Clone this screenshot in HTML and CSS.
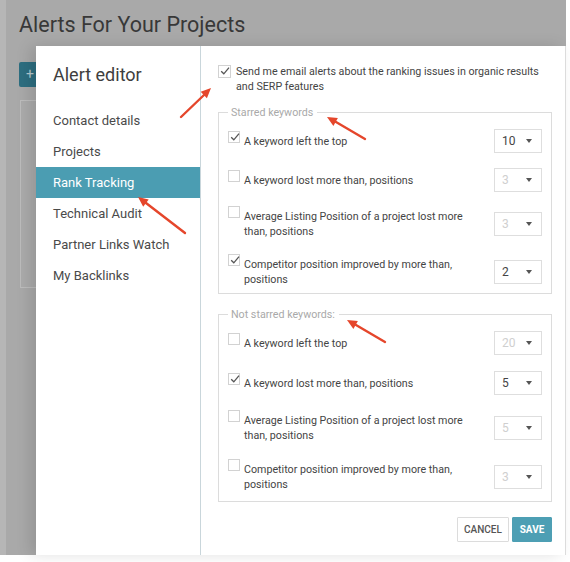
FILE: index.html
```html
<!DOCTYPE html>
<html lang="en">
<head>
<meta charset="utf-8">
<title>Alert editor</title>
<link rel="stylesheet" href="styles.css">
</head>
<body>
<div class="page">
  <div class="backdrop">
    <h1 class="page-title">Alerts For Your Projects</h1>
    <div class="add-btn">+</div>
    <div class="bg-card"></div>
  </div>

  <div class="modal">
    <aside class="sidebar">
      <h2 class="sidebar-title">Alert editor</h2>
      <ul class="menu">
        <li class="menu-item">Contact details</li>
        <li class="menu-item">Projects</li>
        <li class="menu-item active">Rank Tracking</li>
        <li class="menu-item">Technical Audit</li>
        <li class="menu-item">Partner Links Watch</li>
        <li class="menu-item">My Backlinks</li>
      </ul>
    </aside>

    <section class="content">
      <div class="master">
        <span class="check checked master-check"><svg viewBox="0 0 12 12"><polyline points="2.2,6.2 4.8,8.8 10,2.6"/></svg></span>
        <span class="master-text">Send me email alerts about the ranking issues in organic results and SERP features</span>
      </div>

      <fieldset class="group">
        <legend class="group-legend">Starred keywords</legend>
        <div class="row">
          <div class="opt"><span class="check checked"><svg viewBox="0 0 12 12"><polyline points="2.2,6.2 4.8,8.8 10,2.6"/></svg></span><span class="opt-text">A keyword left the top</span></div>
          <div class="select"><span class="val">10</span><span class="caret"></span></div>
        </div>
        <div class="row">
          <div class="opt"><span class="check"></span><span class="opt-text">A keyword lost more than, positions</span></div>
          <div class="select disabled"><span class="val">3</span><span class="caret"></span></div>
        </div>
        <div class="row">
          <div class="opt"><span class="check"></span><span class="opt-text">Average Listing Position of a project lost more than, positions</span></div>
          <div class="select disabled"><span class="val">3</span><span class="caret"></span></div>
        </div>
        <div class="row">
          <div class="opt"><span class="check checked"><svg viewBox="0 0 12 12"><polyline points="2.2,6.2 4.8,8.8 10,2.6"/></svg></span><span class="opt-text">Competitor position improved by more than, positions</span></div>
          <div class="select"><span class="val">2</span><span class="caret"></span></div>
        </div>
      </fieldset>

      <fieldset class="group group-second">
        <legend class="group-legend">Not starred keywords:</legend>
        <div class="row">
          <div class="opt"><span class="check"></span><span class="opt-text">A keyword left the top</span></div>
          <div class="select disabled"><span class="val">20</span><span class="caret"></span></div>
        </div>
        <div class="row">
          <div class="opt"><span class="check checked"><svg viewBox="0 0 12 12"><polyline points="2.2,6.2 4.8,8.8 10,2.6"/></svg></span><span class="opt-text">A keyword lost more than, positions</span></div>
          <div class="select"><span class="val">5</span><span class="caret"></span></div>
        </div>
        <div class="row">
          <div class="opt"><span class="check"></span><span class="opt-text">Average Listing Position of a project lost more than, positions</span></div>
          <div class="select disabled"><span class="val">5</span><span class="caret"></span></div>
        </div>
        <div class="row">
          <div class="opt"><span class="check"></span><span class="opt-text">Competitor position improved by more than, positions</span></div>
          <div class="select disabled"><span class="val">3</span><span class="caret"></span></div>
        </div>
      </fieldset>

      <div class="actions">
        <button class="btn btn-cancel" type="button">CANCEL</button>
        <button class="btn btn-save" type="button">SAVE</button>
      </div>
    </section>
  </div>

  <svg class="arrows" viewBox="0 0 570 562" width="570" height="562">
    <g class="arrow">
      <line x1="181" y1="117" x2="204" y2="95"/>
      <polygon points="211,88 206.9,98.2 200.7,91.7"/>
    </g>
    <g class="arrow">
      <line x1="365" y1="139" x2="336" y2="122"/>
      <polygon points="327,117 337.9,118.1 333.4,125.9"/>
    </g>
    <g class="arrow">
      <line x1="185" y1="233" x2="146" y2="203"/>
      <polygon points="138,197 148.7,199.5 143.2,206.7"/>
    </g>
    <g class="arrow">
      <line x1="385" y1="342" x2="356" y2="325"/>
      <polygon points="347,320 357.9,321.1 353.4,328.9"/>
    </g>
  </svg>
</div>
</body>
</html>
```

FILE: styles.css
```css
* { box-sizing: border-box; }

html, body {
  margin: 0;
  padding: 0;
  background: #ffffff;
}

body {
  font-family: Roboto, "Liberation Sans", Arial, sans-serif;
  color: #444;
}

.page {
  position: relative;
  width: 570px;
  height: 562px;
  overflow: hidden;
}

.backdrop {
  width: 566px;
  height: 555px;
  background: #a9a9a9;
  border-left: 6px solid #b6b6b6;
  padding: 11px 0 0 13px;
}

.page-title {
  margin: 0;
  font-size: 21.5px;
  line-height: 28px;
  font-weight: 400;
  color: #383838;
}

.add-btn {
  margin-top: 23px;
  width: 34px;
  height: 25px;
  background: #2d6e80;
  color: #b7c9ce;
  font-size: 14px;
  line-height: 25px;
  padding-left: 7px;
  border-radius: 2px;
}

.bg-card {
  margin-top: 13px;
  margin-left: 1px;
  width: 60px;
  height: 188px;
  border: 1px solid #bdbdbd;
  background: #ababab;
}

/* modal */
.modal {
  position: absolute;
  left: 36px;
  top: 46px;
  width: 530px;
  height: 509px;
  background: #ffffff;
  display: flex;
  border-right: 1px solid #dcdcdc;
  box-shadow: -6px 0 14px rgba(0, 0, 0, 0.12);
}

.sidebar {
  width: 165px;
  flex: none;
  border-right: 1px solid #c9d6db;
  padding-top: 17px;
}

.sidebar-title {
  margin: 0 0 18px 17px;
  font-size: 18px;
  line-height: 24px;
  font-weight: 400;
  color: #3e3e3e;
}

.menu {
  list-style: none;
  margin: 0;
  padding: 0;
}

.menu-item {
  height: 31px;
  line-height: 31px;
  padding-left: 17px;
  font-size: 13px;
  color: #4a4a4a;
}

.menu-item.active {
  background: #4b9db2;
  color: #ffffff;
}

.content {
  flex: 1;
  padding: 18px 13px 13px 17px;
  display: flex;
  flex-direction: column;
  font-size: 10.7px;
}

.master {
  display: flex;
  align-items: flex-start;
  gap: 5px;
  line-height: 15px;
}

.master-text {
  flex: 1;
  color: #444;
}

.check {
  flex: none;
  width: 13px;
  height: 13px;
  border: 1px solid #d2d2d2;
  background: #fff;
  display: block;
  position: relative;
}

.check svg {
  position: absolute;
  left: 0;
  top: -1px;
  width: 12px;
  height: 12px;
  fill: none;
  stroke: #555;
  stroke-width: 1.3;
}

.master-check {
  margin-top: 1px;
}

.group {
  margin: 11px 0 0 0;
  padding: 9px 9px 5px 9px;
  border: 1px solid #dcdcdc;
  display: flex;
  flex-direction: column;
  gap: 15px;
  min-width: 0;
}

.group-second {
  margin-top: 13px;
  gap: 16px;
  padding-bottom: 8px;
}

.group-legend {
  padding: 0 4px 0 3px;
  font-size: 10.7px;
  line-height: 15px;
  color: #a9a9a9;
}

.row {
  display: flex;
  align-items: center;
  min-height: 24px;
}

.opt {
  flex: 1;
  display: flex;
  align-items: flex-start;
  gap: 4px;
}

.opt .check {
  margin-top: -1.5px;
  width: 12px;
  height: 12px;
}

.opt-text {
  width: 236px;
  padding: 1.5px 0;
  line-height: 15px;
  color: #444;
}

.select {
  flex: none;
  width: 48px;
  height: 24px;
  border: 1px solid #dedede;
  display: flex;
  align-items: center;
  justify-content: space-between;
  padding: 0 9px 0 7px;
  font-size: 12px;
  color: #444;
}

.select.disabled .val {
  color: #cfcfcf;
}

.caret {
  width: 0;
  height: 0;
  border-left: 3.5px solid transparent;
  border-right: 3.5px solid transparent;
  border-top: 4px solid #555;
}

.actions {
  margin-top: 15px;
  display: flex;
  justify-content: flex-end;
  gap: 3px;
}

.btn {
  height: 25px;
  font-family: Roboto, "Liberation Sans", Arial, sans-serif;
  font-size: 10px;
  padding: 0;
  border-radius: 1px;
  cursor: pointer;
}

.btn-cancel {
  width: 52px;
  background: #fff;
  border: 1px solid #dcdcdc;
  color: #555;
  font-weight: 500;
}

.btn-save {
  width: 40px;
  background: #4d9fb4;
  border: 1px solid #4d9fb4;
  color: #fff;
  font-weight: 700;
}

/* annotations */
.arrows {
  position: absolute;
  left: 0;
  top: 0;
  pointer-events: none;
}

.arrow line {
  stroke: #e5462b;
  stroke-width: 2.4;
  stroke-linecap: round;
}

.arrow polygon {
  fill: #e5462b;
}
```
